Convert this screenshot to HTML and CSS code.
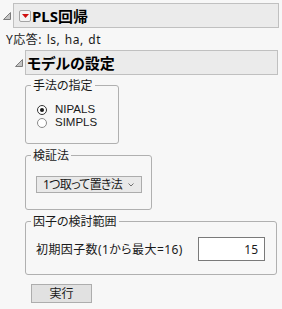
FILE: index.html
```html
<!DOCTYPE html>
<html>
<head>
  <meta charset="UTF-8">
  <title>PLS回帰</title>
  <link rel="stylesheet" href="styles.css">
</head>
<body>
  <div class="report">
    <div class="outline-head">
      <span class="twisty">
        <svg width="8" height="8" viewBox="0 0 8 8"><polygon points="7.5,0.5 7.5,7.5 0.5,7.5"/></svg>
      </span>
      <div class="title-box">
        <span class="menu-btn">
          <svg width="7" height="4" viewBox="0 0 7 4"><polygon points="0,0 7,0 3.5,4"/></svg>
        </span>
        <span class="title">PLS回帰</span>
      </div>
    </div>

    <div class="resp">Y応答: ls, ha, dt</div>

    <div class="outline-head sub">
      <span class="twisty">
        <svg width="8" height="8" viewBox="0 0 8 8"><polygon points="7.5,0.5 7.5,7.5 0.5,7.5"/></svg>
      </span>
      <div class="title-box">
        <span class="title">モデルの設定</span>
      </div>
    </div>

    <div class="sub-body">
      <fieldset class="group g-method">
        <legend>手法の指定</legend>
        <label class="radio"><span class="dot checked"></span>NIPALS</label>
        <label class="radio"><span class="dot"></span>SIMPLS</label>
      </fieldset>

      <fieldset class="group g-valid">
        <legend>検証法</legend>
        <div class="combo">
          <span class="combo-text">1つ取って置き法</span>
          <svg width="6" height="4" viewBox="0 0 6 4"><polyline points="0.5,0.5 3,3 5.5,0.5"/></svg>
        </div>
      </fieldset>

      <fieldset class="group g-factor">
        <legend>因子の検討範囲</legend>
        <div class="factor-row">
          <span class="factor-label">初期因子数(1から最大=16)</span>
          <input type="text" class="num" value="15">
        </div>
      </fieldset>

      <button type="button" class="run">実行</button>
    </div>
  </div>
</body>
</html>
```

FILE: styles.css
```css
body {
  margin: 0;
  background-color: #f7f7f7;
  font-family: "Noto Sans", "Noto Sans CJK JP", sans-serif;
  font-size: 12px;
  color: #1a1a1a;
  font-feature-settings: "palt";
}
.report {
  padding-top: 3px;
}
.outline-head {
  display: flex;
  align-items: center;
  margin-right: 3px;
}
.outline-head.sub {
  margin-top: 2px;
  margin-left: 12px;
  margin-right: 4px;
}
.twisty {
  width: 10px;
  padding-left: 3px;
  display: flex;
}
.twisty svg polygon {
  fill: #c4c4c4;
  stroke: #7c7c7c;
  stroke-width: 1;
}
.title-box {
  flex-grow: 1;
  height: 25px;
  box-sizing: border-box;
  display: flex;
  align-items: center;
  background-color: #ebebeb;
  border: 1px solid #c0c0c0;
}
.menu-btn {
  width: 12px;
  height: 12px;
  box-sizing: border-box;
  margin-left: 5px;
  margin-right: 1px;
  display: flex;
  align-items: center;
  justify-content: center;
  background-color: #f4f4f4;
  border: 1px solid #a3a3a3;
  border-radius: 2px;
}
.menu-btn svg polygon {
  fill: #d01010;
}
.title {
  font-size: 15px;
  font-weight: bold;
  line-height: 18px;
  color: #000;
}
.sub .title {
  margin-left: 1px;
}
.resp {
  margin-top: 4px;
  margin-left: 6px;
  line-height: 16px;
  letter-spacing: 0.5px;
  word-spacing: 1px;
}
.sub-body {
  padding-top: 3px;
  padding-left: 25px;
}
.group {
  margin: 0;
  min-width: 0;
  box-sizing: border-box;
  border: 1px solid #b0b0b0;
  border-radius: 3px;
}
.group legend {
  padding: 0 2px;
  line-height: 15px;
}
.g-method {
  width: 94px;
  padding: 10px 0 14px 11px;
}
.g-method legend {
  margin-left: -6px;
}
.g-valid {
  width: 127px;
  margin-top: 4px;
  padding: 13px 0 16px 10px;
}
.g-valid legend,
.g-factor legend {
  margin-left: -5px;
}
.g-factor {
  width: 252px;
  margin-top: 4px;
  padding: 8px 11px 13px 10px;
}
.radio {
  display: flex;
  align-items: center;
  height: 13px;
  line-height: 13px;
  font-family: "Liberation Sans", sans-serif;
  font-size: 11.5px;
}
.dot {
  width: 10px;
  height: 10px;
  box-sizing: border-box;
  margin-right: 8px;
  border: 1px solid #8a8a8a;
  border-radius: 50%;
  background-color: #fff;
  display: flex;
  align-items: center;
  justify-content: center;
}
.dot.checked {
  border-color: #333;
}
.dot.checked::after {
  content: "";
  width: 4px;
  height: 4px;
  border-radius: 50%;
  background-color: #1a1a1a;
}
.combo {
  width: 106px;
  height: 17px;
  box-sizing: border-box;
  padding: 0 7px 0 6px;
  display: flex;
  align-items: center;
  justify-content: space-between;
  background-color: #e9e9e9;
  border: 1px solid #acacac;
  line-height: 15px;
}
.combo-text {
  white-space: nowrap;
  letter-spacing: -0.7px;
}
.combo svg {
  flex-shrink: 0;
}
.combo svg polyline {
  fill: none;
  stroke: #707070;
  stroke-width: 1;
}
.factor-row {
  display: flex;
  align-items: center;
  justify-content: space-between;
}
.factor-label {
  letter-spacing: 0.4px;
}
.num {
  width: 67px;
  height: 24px;
  box-sizing: border-box;
  margin: 0;
  padding: 0 6px;
  border: 1px solid #7a7a7a;
  background-color: #fff;
  font-family: inherit;
  font-size: 12px;
  color: #1a1a1a;
  text-align: right;
}
.run {
  display: block;
  width: 61px;
  height: 19px;
  margin-top: 9px;
  margin-left: 6px;
  padding: 0;
  background-color: #e1e1e1;
  border: 1px solid #adadad;
  border-radius: 0;
  font-family: inherit;
  font-size: 12px;
  line-height: 15px;
  color: #1a1a1a;
}
```
